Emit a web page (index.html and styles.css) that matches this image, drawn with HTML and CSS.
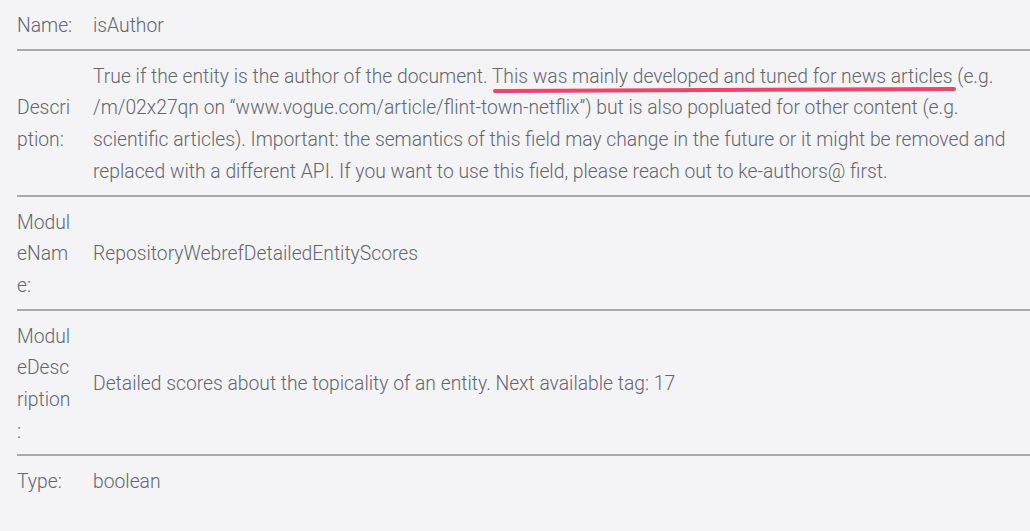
FILE: index.html
```html
<!DOCTYPE html>
<html lang="en">
<head>
<meta charset="utf-8">
<link rel="stylesheet" href="styles.css">
</head>
<body>
<table class="props">
  <tr>
    <th class="label">Name:</th>
    <td class="value">isAuthor</td>
  </tr>
  <tr>
    <th class="label">Description:</th>
    <td class="value">True if the entity is the author of the document. <span class="hl">This was mainly developed and tuned for news articles</span> (e.g. /m/02x27qn on “www.vogue.com/article/flint-town-netflix”) but is also popluated for other content (e.g. scientific articles). Important: the semantics of this field may change in the future or it might be removed and replaced with a different API. If you want to use this field, please reach out to ke-authors@ first.</td>
  </tr>
  <tr>
    <th class="label">ModuleName:</th>
    <td class="value">RepositoryWebrefDetailedEntityScores</td>
  </tr>
  <tr>
    <th class="label">ModuleDescription:</th>
    <td class="value">Detailed scores about the topicality of an entity. Next available tag: 17</td>
  </tr>
  <tr>
    <th class="label">Type:</th>
    <td class="value">boolean</td>
  </tr>
</table>
</body>
</html>
```

FILE: styles.css
```css
html, body {
  margin: 0;
  padding: 0;
  background: #f4f4f6;
}
body {
  padding-left: 17px;
  font-family: Roboto, "Liberation Sans", sans-serif;
  font-weight: 300;
  font-size: 19.3px;
  line-height: 31.7px;
  color: #62666f;
}
.props {
  width: 100%;
  border-collapse: collapse;
}
.props tr {
  border-bottom: 2px solid #a9a9ab;
}
.props tr:last-child {
  border-bottom: none;
}
.label {
  width: 57px;
  padding: 10px 19px 7px 0;
  text-align: left;
  font-weight: 300;
  vertical-align: middle;
  word-break: break-all;
  line-break: anywhere;
}
.value {
  padding: 10px 15px 7px 0;
  vertical-align: middle;
}
.hl {
  position: relative;
}
.hl::after {
  content: "";
  position: absolute;
  left: 1px;
  right: -3px;
  bottom: -4px;
  height: 3.5px;
  border-radius: 2px;
  background: #e9456d;
  transform: rotate(-0.25deg);
}
```
